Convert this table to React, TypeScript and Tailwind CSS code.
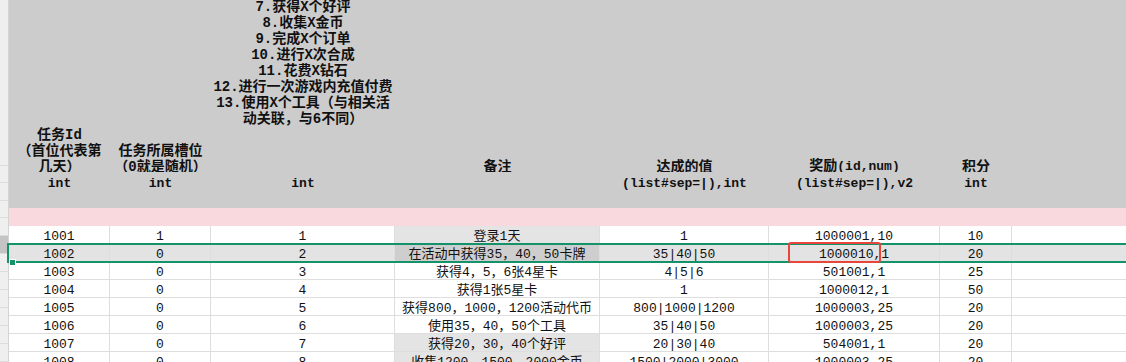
import React from "react";

type Row = {
	id: string;
	slot: string;
	type: string;
	note: string;
	target: string;
	reward: string;
	score: string;
	noteFill?: boolean;
};

const rows: Row[] = [
	{ id: "1001", slot: "1", type: "1", note: "登录1天", target: "1", reward: "1000001,10", score: "10", noteFill: true },
	{ id: "1002", slot: "0", type: "2", note: "在活动中获得35，40，50卡牌", target: "35|40|50", reward: "1000010,1", score: "20", noteFill: true },
	{ id: "1003", slot: "0", type: "3", note: "获得4，5，6张4星卡", target: "4|5|6", reward: "501001,1", score: "25" },
	{ id: "1004", slot: "0", type: "4", note: "获得1张5星卡", target: "1", reward: "1000012,1", score: "50" },
	{ id: "1005", slot: "0", type: "5", note: "获得800，1000，1200活动代币", target: "800|1000|1200", reward: "1000003,25", score: "20" },
	{ id: "1006", slot: "0", type: "6", note: "使用35，40，50个工具", target: "35|40|50", reward: "1000003,25", score: "20" },
	{ id: "1007", slot: "0", type: "7", note: "获得20，30，40个好评", target: "20|30|40", reward: "504001,1", score: "20", noteFill: true },
	{ id: "1008", slot: "0", type: "8", note: "收集1200，1500，2000金币", target: "1500|2000|3000", reward: "1000003,25", score: "20", noteFill: true },
];

const selectedId = "1002";

const typeLines = [
	"7.获得X个好评",
	"8.收集X金币",
	"9.完成X个订单",
	"10.进行X次合成",
	"11.花费X钻石",
	"12.进行一次游戏内充值付费",
	"13.使用X个工具（与相关活",
	"动关联，与6不同）",
];

// column widths incl. right gridline
const colW = ["w-[101px]", "w-[101px]", "w-[184px]", "w-[205px]", "w-[169px]", "w-[171px]", "w-[72px]"];

const HeadCell = ({ w, lines, extra = "" }: { w: string; lines: React.ReactNode[]; extra?: string }) => (
	<div className={`${w} shrink-0 h-full flex flex-col justify-end items-center ${extra}`}>
		<div className="-mb-[3px] flex flex-col items-center">
			{lines.map((l, i) => (
				<div key={i} className="leading-[16px] whitespace-nowrap">
					{l}
				</div>
			))}
		</div>
	</div>
);

const App: React.FC = () => {
	return (
		<div className="relative w-[1126px] h-[362px] overflow-hidden bg-white flex font-['Liberation_Mono','Noto_Sans_CJK_SC',monospace] text-[13px] text-[#111]">
			{/* row headers */}
			<div className="w-[9px] shrink-0 flex flex-col bg-[#efefef] border-r border-[#d4d4d4]">
				<div className="h-[172px] border-b border-[#dcdcdc]" />
				<div className="h-[18px] border-b border-[#dcdcdc]" />
				<div className="h-[18px] border-b border-[#dcdcdc]" />
				<div className="h-[18px] border-b border-[#dcdcdc]" />
				{rows.map(r => (
					<div
						key={r.id}
						className={`h-[18px] shrink-0 border-b border-[#dcdcdc] ${r.id === selectedId ? "bg-[#c4c4c4]" : ""}`}
					/>
				))}
			</div>

			<div className="flex-1 flex flex-col">
				{/* header names */}
				<div className="h-[172px] shrink-0 flex bg-[#cccccc] font-bold text-[14px]">
					<HeadCell w={colW[0]} lines={["任务Id", "（首位代表第", "几天）"]} />
					<HeadCell w={colW[1]} lines={["任务所属槽位", "（0就是随机）"]} />
					<HeadCell w={colW[2]} lines={typeLines} extra="pb-[48px]" />
					<HeadCell w={colW[3]} lines={["备注"]} />
					<HeadCell w={colW[4]} lines={["达成的值"]} />
					<HeadCell
						w={colW[5]}
						lines={[
							<>
								奖励<span className="text-[13px]">(id,num)</span>
							</>,
						]}
					/>
					<HeadCell w={colW[6]} lines={["积分"]} />
				</div>
				{/* header types */}
				<div className="h-[18px] shrink-0 flex bg-[#cccccc] font-bold leading-[23px]">
					<div className={`${colW[0]} text-center`}>int</div>
					<div className={`${colW[1]} text-center`}>int</div>
					<div className={`${colW[2]} text-center`}>int</div>
					<div className={`${colW[3]} text-center`} />
					<div className={`${colW[4]} text-center whitespace-nowrap`}>(list#sep=|),int</div>
					<div className={`${colW[5]} text-center whitespace-nowrap`}>(list#sep=|),v2</div>
					<div className={`${colW[6]} text-center`}>int</div>
				</div>
				<div className="h-[18px] shrink-0 bg-[#cccccc]" />
				<div className="h-[18px] shrink-0 bg-[#f9d9de]" />

				{rows.map(r => {
					const sel = r.id === selectedId;
					const base = `h-[18px] shrink-0 border-r border-b border-[#dedede] text-center leading-[18px] pt-[2px] whitespace-nowrap overflow-hidden`;
					const fill = sel ? "bg-[#e3e3e3]" : "";
					const noteFill = r.noteFill ? (sel ? "bg-[#cecece]" : "bg-[#e4e4e4]") : fill;
					return (
						<div key={r.id} className="flex">
							<div className={`${colW[0]} ${base} ${fill}`}>{r.id}</div>
							<div className={`${colW[1]} ${base} ${fill}`}>{r.slot}</div>
							<div className={`${colW[2]} ${base} ${fill}`}>{r.type}</div>
							<div className={`${colW[3]} ${base} ${noteFill}`}>{r.note}</div>
							<div className={`${colW[4]} ${base} ${fill}`}>{r.target}</div>
							<div className={`${colW[5]} ${base} ${fill}`}>{r.reward}</div>
							<div className={`${colW[6]} ${base} ${fill}`}>{r.score}</div>
							<div className={`flex-1 ${base} border-r-0 ${fill}`} />
						</div>
					);
				})}
			</div>

			{/* selected row outline */}
			<div className="absolute left-[7px] top-[243px] w-[1130px] h-[20px] border-2 border-[#14936a]" />
			<div className="absolute left-[9px] top-[259px] w-[7px] h-[7px] bg-[#14936a] border border-white" />

			{/* annotation box */}
			<div className="absolute left-[788px] top-[242px] w-[93px] h-[21px] border-2 border-[#e8453c] rounded-[3px]" />
		</div>
	);
};

export default App;
